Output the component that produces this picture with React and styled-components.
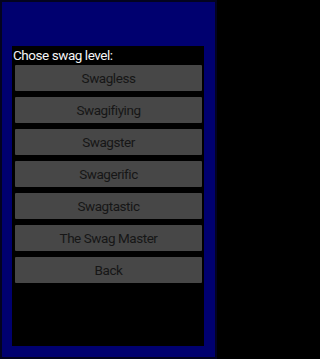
import React from 'react';
import styled, { createGlobalStyle } from 'styled-components';

const GlobalStyle = createGlobalStyle`
  html, body {
    margin: 0;
    padding: 0;
    background: #000;
  }
  body {
    font-family: Roboto, 'Liberation Sans', sans-serif;
  }
`;

const Frame = styled.div`
  width: 217px;
  height: 359px;
  box-sizing: border-box;
  border: 2px solid #03031f;
  background: #00006f;
  padding: 44px 11px 11px 10px;
  display: flex;
`;

const Panel = styled.div`
  flex: 1;
  background: #000;
  display: flex;
  flex-direction: column;
  padding: 1px 2px 0 3px;
`;

const Title = styled.div`
  color: #f4f4f4;
  font-size: 13.5px;
  letter-spacing: -0.45px;
  line-height: 17px;
  margin-left: -2px;
  margin-bottom: 1px;
`;

const Buttons = styled.div`
  display: flex;
  flex-direction: column;
  gap: 6px;
`;

const Button = styled.button`
  height: 26px;
  border: none;
  border-radius: 1px;
  background: #474747;
  color: #161616;
  font-family: Roboto, 'Liberation Sans', sans-serif;
  font-size: 13.5px;
  letter-spacing: -0.45px;
  padding: 0;
  cursor: pointer;
`;

const levels = [
  'Swagless',
  'Swagifiying',
  'Swagster',
  'Swagerific',
  'Swagtastic',
  'The Swag Master',
  'Back',
];

export default function App() {
  return (
    <>
      <GlobalStyle />
      <Frame>
        <Panel>
          <Title>Chose swag level:</Title>
          <Buttons>
            {levels.map((name) => (
              <Button key={name}>{name}</Button>
            ))}
          </Buttons>
        </Panel>
      </Frame>
    </>
  );
}
